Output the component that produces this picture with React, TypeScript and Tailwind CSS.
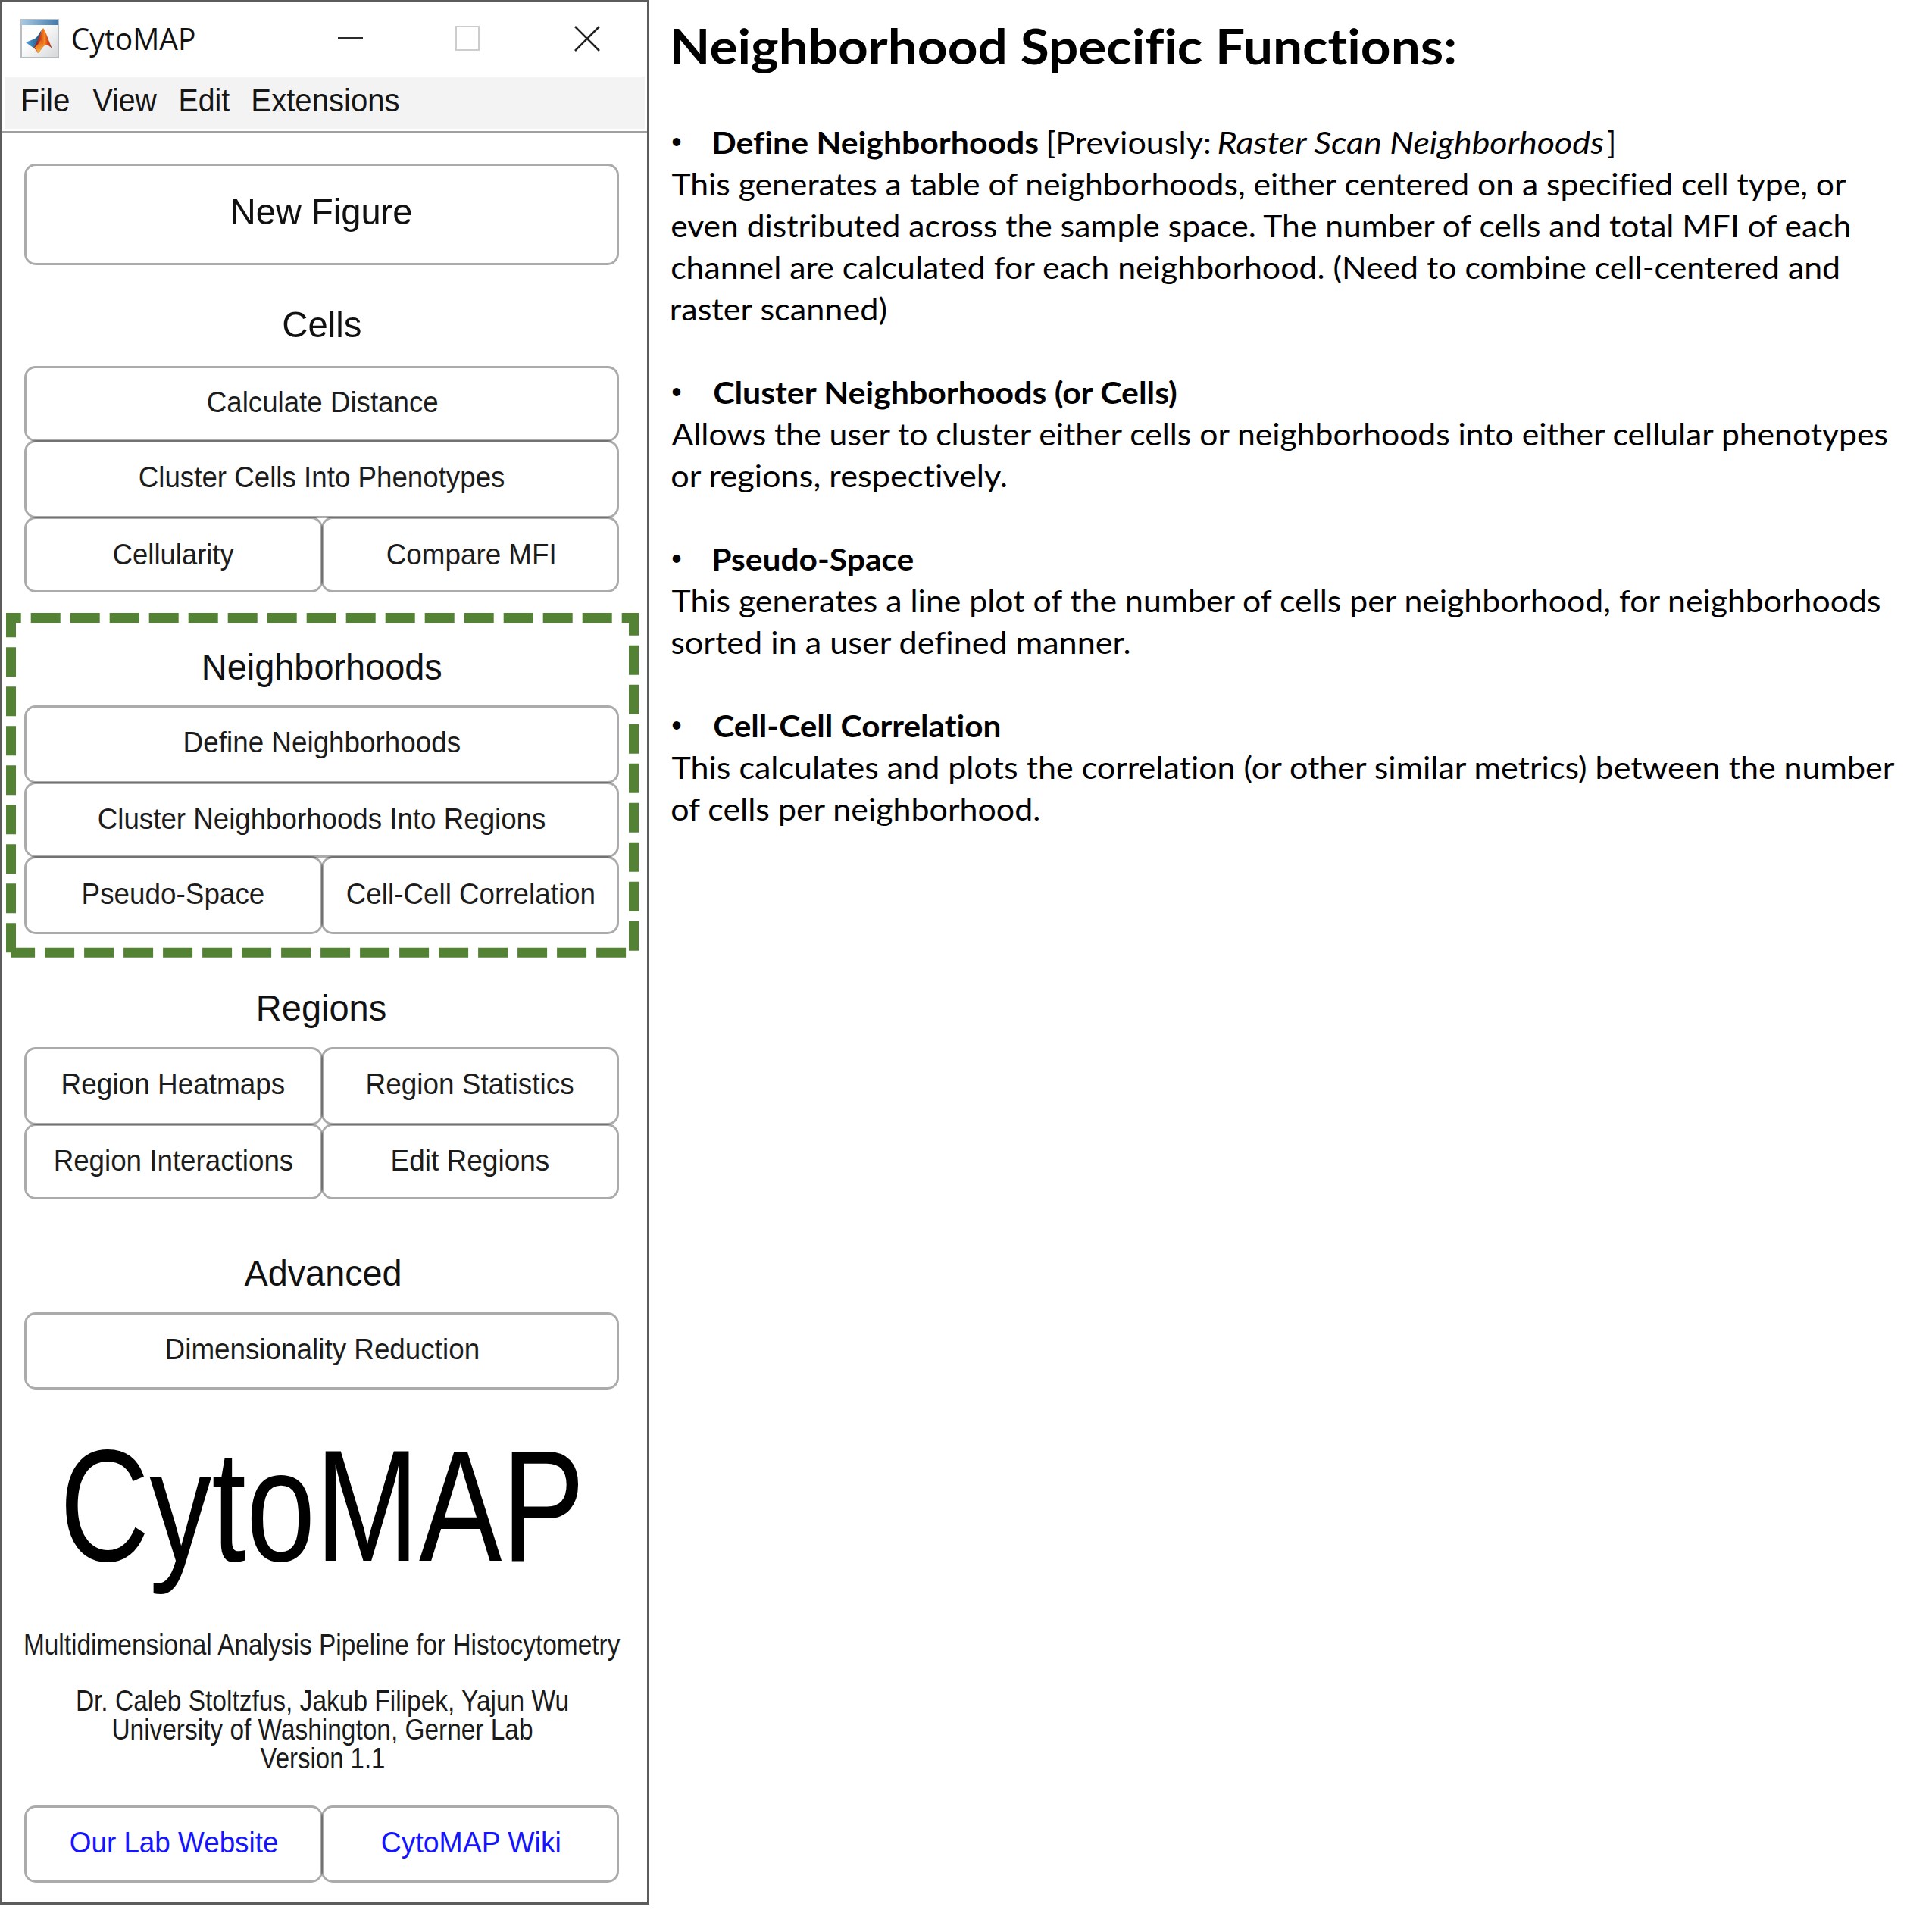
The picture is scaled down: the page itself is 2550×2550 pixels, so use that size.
import { useLayoutEffect, useRef, useState } from "react";

type FitProps = { text: string; width: number; className?: string };

/* Glyph bounds are measured enlarged, since canvas rounds them to whole pixels. */
const ZOOM = 10;

/* Room kept free at the left of each line for anti-aliased edges. */
const BLEED = 1.5;

/* One line of text whose drawn glyphs fill a box `width` pixels wide. */
function Fit({ text, width, className = "" }: FitProps) {
  const ref = useRef<HTMLSpanElement>(null);
  const [fit, setFit] = useState({ scale: 1, shift: 0 });

  useLayoutEffect(() => {
    const el = ref.current;
    const ctx = document.createElement("canvas").getContext("2d");
    if (!el || !ctx) return;
    const s = getComputedStyle(el);
    ctx.font = `${s.fontStyle} ${s.fontWeight} ${parseFloat(s.fontSize) * ZOOM}px ${s.fontFamily}`;
    const m = ctx.measureText(text);
    const left = -m.actualBoundingBoxLeft / ZOOM;
    const right = (m.width - m.actualBoundingBoxRight) / ZOOM;
    const ink = el.offsetWidth - left - right;
    const scale = (width - BLEED) / ink;
    setFit({ scale, shift: BLEED - left * scale });
  }, [text, width]);

  return (
    <span className={`block shrink-0 whitespace-nowrap leading-none ${className}`} style={{ width }}>
      <span
        ref={ref}
        className="inline-block origin-left align-top [font-variant-ligatures:none]"
        style={{ transform: `translateX(${fit.shift}px) scaleX(${fit.scale})` }}
      >
        {text}
      </span>
    </span>
  );
}

type Cell = { text: string; width: number; pad?: string; blue?: boolean };

function Row({ cells, height }: { cells: Cell[]; height: string }) {
  return (
    <div className={`flex ${height}`}>
      {cells.map((c, i) => (
        <button
          key={c.text}
          className={`flex min-w-0 flex-1 items-center justify-center rounded-[15px] border-[3px] border-black/33 ${c.pad ?? "pb-[6px]"} ${i > 0 ? "-ml-[2px]" : ""}`}
        >
          <Fit
            text={c.text}
            width={c.width}
            className={c.blue ? "text-[39px] text-[#1414ff]" : "text-[39px] text-[#1c1c1c]"}
          />
        </button>
      ))}
    </div>
  );
}

function Heading({ text, width, className }: FitProps) {
  return (
    <div className={`flex h-[60px] items-center justify-center ${className}`}>
      <Fit text={text} width={width} className="text-[49px] text-[#111]" />
    </div>
  );
}

function AppIcon() {
  return (
    <svg viewBox="0 0 51 52" className="h-[52px] w-[51px] shrink-0">
      <defs>
        <linearGradient id="head" x1="0" x2="1">
          <stop offset="0" stopColor="#a9cbe4" />
          <stop offset="1" stopColor="#3f79ad" />
        </linearGradient>
        <linearGradient id="page" x1="0" y1="0" x2="1" y2="1">
          <stop offset="0.4" stopColor="#fdfdfd" />
          <stop offset="1" stopColor="#d4d6d8" />
        </linearGradient>
        <linearGradient id="wing" x1="0" x2="1">
          <stop offset="0" stopColor="#4fa3dc" />
          <stop offset="1" stopColor="#1f4a78" />
        </linearGradient>
        <linearGradient id="peak" x1="0" x2="1">
          <stop offset="0" stopColor="#5a1216" />
          <stop offset="0.35" stopColor="#c8391b" />
          <stop offset="0.58" stopColor="#f58a1f" />
          <stop offset="0.75" stopColor="#d9481c" />
          <stop offset="1" stopColor="#a3281c" />
        </linearGradient>
        <linearGradient id="base" x1="0" y1="0" x2="0.3" y2="1">
          <stop offset="0" stopColor="#d8401c" />
          <stop offset="1" stopColor="#fbb034" />
        </linearGradient>
      </defs>
      <rect x="1" y="1" width="49" height="50" fill="url(#page)" stroke="#b9bcc0" strokeWidth="2" />
      <rect x="1" y="1" width="49" height="7" fill="url(#head)" />
      <path d="M7 31 L18 26.500 C22 25 25 19 28 14 L24 31 L17 38 Z" fill="url(#wing)" />
      <path d="M17 38 C22 34 25 20 30 12 C34 16 37 30 42 39 C37 35 35 33 32 35 C28 38 26 43 23 45 C21 41 19 39 17 38 Z" fill="url(#peak)" />
      <path d="M18 38 C22 35 25 32 27 27 L31 35 C28 38 26 43 23 45 C22 42 20 39 18 38 Z" fill="url(#base)" />
    </svg>
  );
}

function TitleBar() {
  return (
    <div className="flex h-[98px] shrink-0 items-center pb-[3px] pl-[24px]">
      <AppIcon />
      <Fit text="CytoMAP" width={163} className="ml-[16px] pt-[1px] font-['Open_Sans',sans-serif] text-[40px] text-[#111]" />
      <div className="ml-[189px] h-[3px] w-[33px] bg-[#2b2b2b]" />
      <div className="ml-[122px] h-[33px] w-[32px] border-2 border-[#cccccc]" />
      <svg viewBox="0 0 34 34" className="ml-[125px] h-[34px] w-[34px]">
        <path d="M1 1 L33 33 M33 1 L1 33" stroke="#222" strokeWidth="2.600" />
      </svg>
    </div>
  );
}

function MenuBar() {
  return (
    <div className="mx-[3px] flex h-[69px] shrink-0 items-center bg-[#f3f3f3] pb-[5px] pl-[23px] text-[42px] text-[#161616]">
      <Fit text="File" width={62} />
      <Fit text="View" width={86} className="ml-[30px]" />
      <Fit text="Edit" width={66} className="ml-[30px]" />
      <Fit text="Extensions" width={193} className="ml-[30px]" />
    </div>
  );
}

function AppWindow() {
  return (
    <div className="relative flex h-[2514px] w-[857px] shrink-0 flex-col border-[3px] border-[#5c5c5c] bg-white">
      <TitleBar />
      <MenuBar />
      <div className="mt-[3px] h-[3px] shrink-0 bg-[#a0a0a0]" />
      <div className="flex flex-col pl-[29px] pr-[37px] pt-[40px]">
        <div className="flex h-[134px] items-center justify-center rounded-[15px] border-[3px] border-black/33 pb-[8px]">
          <Fit text="New Figure" width={237} className="text-[49px] text-[#111]" />
        </div>

        <Heading text="Cells" width={103} className="mt-[48px] mb-[25px]" />
        <Row height="h-[100px]" cells={[{ text: "Calculate Distance", width: 304 }]} />
        <Row height="-mt-[2px] h-[103px]" cells={[{ text: "Cluster Cells Into Phenotypes", width: 482.5, pad: "pb-[7px]" }]} />
        <Row
          height="-mt-[2px] h-[100px]"
          cells={[
            { text: "Cellularity", width: 159.5, pad: "pb-[2px]" },
            { text: "Compare MFI", width: 221, pad: "pb-[2px]" },
          ]}
        />

        <Heading text="Neighborhoods" width={314} className="mt-[68px] mb-[21px]" />
        <Row height="h-[103px]" cells={[{ text: "Define Neighborhoods", width: 364 }]} />
        <Row height="-mt-[2px] h-[100px]" cells={[{ text: "Cluster Neighborhoods Into Regions", width: 590.5, pad: "pb-[3px]" }]} />
        <Row
          height="-mt-[2px] h-[103px]"
          cells={[
            { text: "Pseudo-Space", width: 239, pad: "pb-[5px]" },
            { text: "Cell-Cell Correlation", width: 327, pad: "pb-[5px]" },
          ]}
        />

        <Heading text="Regions" width={169} className="mt-[67px] mb-[22px]" />
        <Row
          height="h-[103px]"
          cells={[
            { text: "Region Heatmaps", width: 293 },
            { text: "Region Statistics", width: 272 },
          ]}
        />
        <Row
          height="-mt-[2px] h-[100px]"
          cells={[
            { text: "Region Interactions", width: 314, pad: "pb-[3px]" },
            { text: "Edit Regions", width: 207, pad: "pb-[3px]" },
          ]}
        />

        <Heading text="Advanced" width={207} className="mt-[67px] mb-[22px]" />
        <Row height="h-[102px]" cells={[{ text: "Dimensionality Reduction", width: 412 }]} />

        <div className="mt-[49px] flex flex-col items-center text-[#1a1a1a]">
          <Fit text="CytoMAP" width={680} className="text-[210px] text-black" />
          <Fit text="Multidimensional Analysis Pipeline for Histocytometry" width={786} className="mt-[59px] mb-[36px] text-[38px]" />
          <Fit text="Dr. Caleb Stoltzfus, Jakub Filipek, Yajun Wu" width={648} className="text-[38px]" />
          <Fit text="University of Washington, Gerner Lab" width={554} className="text-[38px]" />
          <Fit text="Version 1.1" width={165} className="text-[38px]" />
        </div>

        <Row
          height="mt-[43px] h-[102px]"
          cells={[
            { text: "Our Lab Website", width: 274, blue: true },
            { text: "CytoMAP Wiki", width: 235, blue: true },
          ]}
        />
      </div>

      <svg viewBox="0 0 851 470" className="pointer-events-none absolute top-[797px] left-0 h-[470px] w-[851px]">
        <path
          d="M11.500 457.300 V15.500 H833.500 V457.300 H11.500"
          fill="none"
          stroke="#548235"
          strokeWidth="13"
          strokeDasharray="39 13"
        />
      </svg>
    </div>
  );
}

function Line({ text, width }: { text: string; width: number }) {
  return (
    <div className="flex h-[55px] items-center">
      <Fit text={text} width={width} />
    </div>
  );
}

function Bullet({ text, width }: { text: string; width: number }) {
  return (
    <>
      <Fit text="•" width={12} className="ml-[1px] font-['Liberation_Sans',sans-serif]" />
      <Fit text={text} width={width} className="ml-[43px] font-bold" />
    </>
  );
}

const sections = [
  {
    title: "Cluster Neighborhoods (or Cells)",
    width: 612,
    lines: [
      { text: "Allows the user to cluster either cells or neighborhoods into either cellular phenotypes", width: 1606 },
      { text: "or regions, respectively.", width: 443 },
    ],
  },
  {
    title: "Pseudo-Space",
    width: 265,
    lines: [
      { text: "This generates a line plot of the number of cells per neighborhood, for neighborhoods", width: 1596 },
      { text: "sorted in a user defined manner.", width: 606 },
    ],
  },
  {
    title: "Cell-Cell Correlation",
    width: 378,
    lines: [
      { text: "This calculates and plots the correlation (or other similar metrics) between the number", width: 1615 },
      { text: "of cells per neighborhood.", width: 486 },
    ],
  },
];

function Notes() {
  return (
    <div className="flex flex-col pt-[28px] pl-[28px] font-[Lato,sans-serif] text-[41px] text-black">
      <Fit text="Neighborhood Specific Functions:" width={1032} className="ml-[3px] text-[65px] font-bold" />
      <div className="mt-[67px] flex h-[55px] items-center">
        <Bullet text="Define Neighborhoods" width={429} />
        <Fit text="[Previously:" width={214} className="ml-[12px]" />
        <Fit text="Raster Scan Neighborhoods" width={510} className="ml-[11px] italic" />
        <Fit text="]" width={10} className="ml-[3px]" />
      </div>
      <Line text="This generates a table of neighborhoods, either centered on a specified cell type, or" width={1551} />
      <Line text="even distributed across the sample space. The number of cells and total MFI of each" width={1556} />
      <Line text="channel are calculated for each neighborhood. (Need to combine cell-centered and" width={1541} />
      <Line text="raster scanned)" width={285} />
      {sections.map((s) => (
        <div key={s.title} className="mt-[55px]">
          <div className="flex h-[55px] items-center">
            <Bullet text={s.title} width={s.width} />
          </div>
          {s.lines.map((l) => (
            <Line key={l.text} text={l.text} width={l.width} />
          ))}
        </div>
      ))}
    </div>
  );
}

export default function App() {
  return (
    <div className="flex h-[2550px] w-[2550px] items-start overflow-hidden bg-white font-['Liberation_Sans',Arial,sans-serif]">
      <AppWindow />
      <Notes />
    </div>
  );
}
